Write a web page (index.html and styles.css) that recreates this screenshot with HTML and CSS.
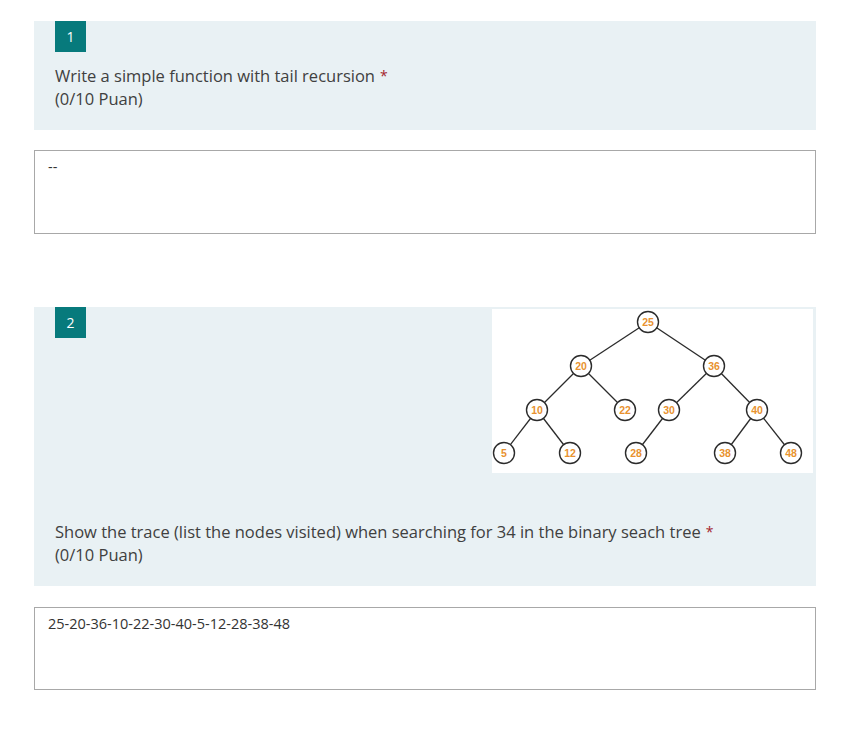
FILE: index.html
```html
<!DOCTYPE html>
<html lang="en">
<head>
<meta charset="utf-8">
<title>Quiz</title>
<link rel="stylesheet" href="styles.css">
</head>
<body>
<main class="page">
  <section class="question q1">
    <div class="q-head">
      <div class="badge">1</div>
    </div>
    <div class="q-title">
      <span>Write a simple function with tail recursion</span><span class="req">*</span>
      <div class="points">(0/10 Puan)</div>
    </div>
  </section>
  <div class="answer a1">--</div>

  <section class="question q2">
    <div class="q-head">
      <div class="badge">2</div>
      <div class="q-image">
        <svg class="tree" width="321" height="164" viewBox="0 0 321 164" xmlns="http://www.w3.org/2000/svg">
          <g class="edges" stroke="#2b2b2b" stroke-width="1.3">
            <line x1="156" y1="13" x2="89" y2="57"/>
            <line x1="156" y1="13" x2="222" y2="57"/>
            <line x1="89" y1="57" x2="45" y2="101"/>
            <line x1="89" y1="57" x2="133" y2="101"/>
            <line x1="222" y1="57" x2="177" y2="101"/>
            <line x1="222" y1="57" x2="265" y2="101"/>
            <line x1="45" y1="101" x2="12" y2="144"/>
            <line x1="45" y1="101" x2="78" y2="144"/>
            <line x1="177" y1="101" x2="144" y2="144"/>
            <line x1="265" y1="101" x2="233" y2="144"/>
            <line x1="265" y1="101" x2="299" y2="144"/>
          </g>
          <g class="nodes" fill="#fff" stroke="#2b2b2b" stroke-width="1.4">
            <circle cx="156" cy="13" r="10.5"/>
            <circle cx="89" cy="57" r="10.5"/>
            <circle cx="222" cy="57" r="10.5"/>
            <circle cx="45" cy="101" r="10.5"/>
            <circle cx="133" cy="101" r="10.5"/>
            <circle cx="177" cy="101" r="10.5"/>
            <circle cx="265" cy="101" r="10.5"/>
            <circle cx="12" cy="144" r="10.5"/>
            <circle cx="78" cy="144" r="10.5"/>
            <circle cx="144" cy="144" r="10.5"/>
            <circle cx="233" cy="144" r="10.5"/>
            <circle cx="299" cy="144" r="10.5"/>
          </g>
          <g class="labels" fill="#e8922f" font-family="Liberation Sans, Arial, sans-serif" font-weight="bold" font-size="10.5" text-anchor="middle">
            <text x="156" y="16.8">25</text>
            <text x="89" y="60.8">20</text>
            <text x="222" y="60.8">36</text>
            <text x="45" y="104.8">10</text>
            <text x="133" y="104.8">22</text>
            <text x="177" y="104.8">30</text>
            <text x="265" y="104.8">40</text>
            <text x="12" y="147.8">5</text>
            <text x="78" y="147.8">12</text>
            <text x="144" y="147.8">28</text>
            <text x="233" y="147.8">38</text>
            <text x="299" y="147.8">48</text>
          </g>
        </svg>
      </div>
    </div>
    <div class="q-title">
      <span>Show the trace (list the nodes visited) when searching for 34 in the binary seach tree</span><span class="req">*</span>
      <div class="points">(0/10 Puan)</div>
    </div>
  </section>
  <div class="answer a2">25-20-36-10-22-30-40-5-12-28-38-48</div>
</main>
</body>
</html>
```

FILE: styles.css
```css
html, body {
  margin: 0;
  padding: 0;
  background: #ffffff;
}

body {
  font-family: "Open Sans", "Noto Sans", sans-serif;
  color: #333333;
}

.page {
  width: 782px;
  margin-left: 34px;
  padding-top: 21px;
  display: flex;
  flex-direction: column;
}

.question {
  background: #e9f1f4;
  padding: 0 3px 20px 21px;
}

.q2 {
  margin-top: 73px;
}

.q-head {
  display: flex;
  align-items: flex-start;
}

.badge {
  width: 31px;
  height: 31px;
  background: #077a7c;
  color: #ffffff;
  font-size: 14px;
  line-height: 31px;
  text-align: center;
}

.q-image {
  margin-left: auto;
  margin-top: 2px;
  margin-bottom: 35px;
  width: 321px;
  height: 164px;
  background: #ffffff;
}

.tree {
  display: block;
}

.q-title {
  margin-top: 12px;
  font-size: 16.5px;
  line-height: 23px;
  color: #404040;
}

.req {
  color: #a4262c;
  margin-left: 5px;
  font-size: 14px;
  vertical-align: 1px;
}

.answer {
  border: 1px solid #a8a8a8;
  padding: 6px 13px 0;
  font-size: 14.5px;
  line-height: 20px;
  color: #333333;
  box-sizing: border-box;
}

.a1 {
  margin-top: 20px;
  height: 84px;
}

.a2 {
  margin-top: 21px;
  height: 83px;
}
```
